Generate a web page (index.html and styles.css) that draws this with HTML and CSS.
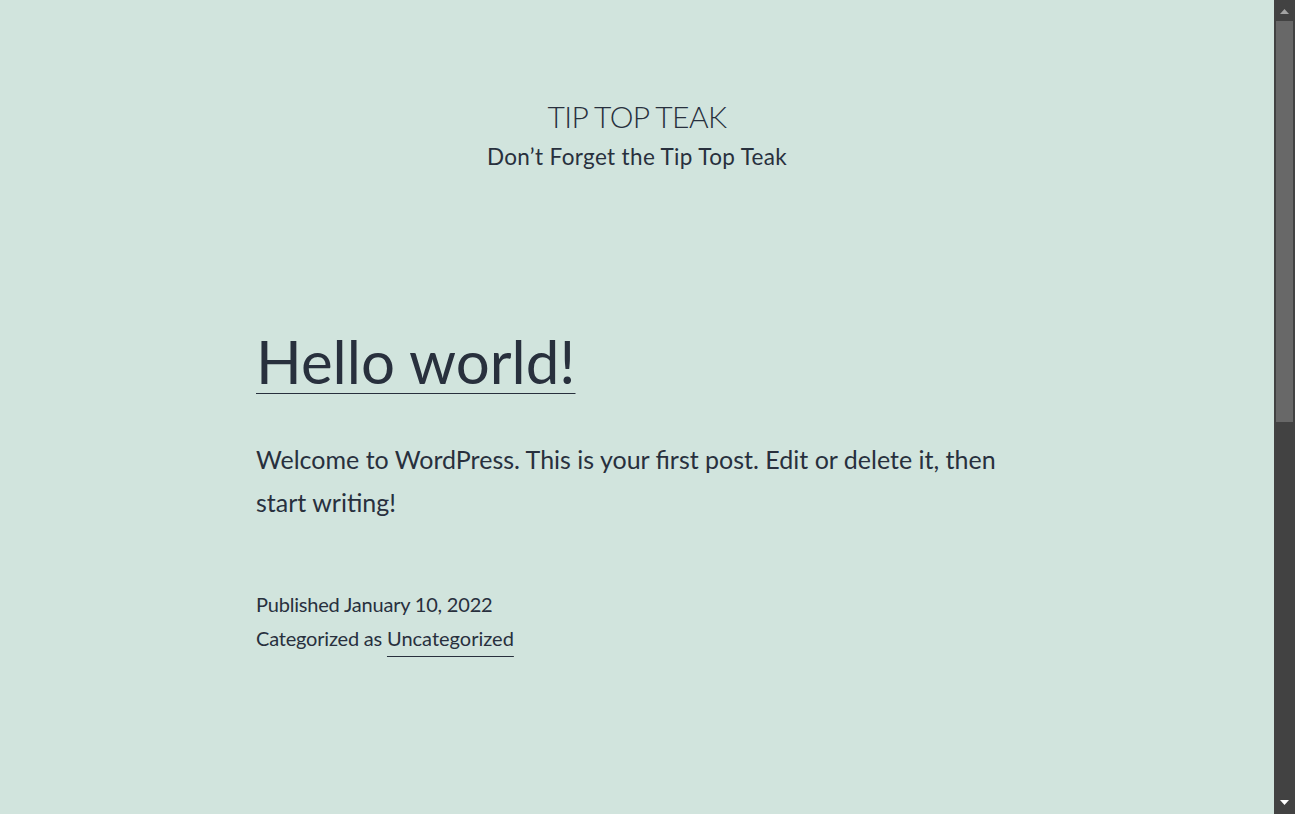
FILE: index.html
```html
<!DOCTYPE html>
<html lang="en">
<head>
<meta charset="utf-8">
<title>TIP TOP TEAK – Don’t Forget the Tip Top Teak</title>
<link rel="stylesheet" href="styles.css">
</head>
<body>
<div class="viewport">
  <div class="site">
    <header class="site-header">
      <p class="site-title"><a href="#">TIP TOP TEAK</a></p>
      <p class="site-description">Don’t Forget the Tip Top Teak</p>
    </header>

    <main class="site-main">
      <article class="post">
        <h2 class="entry-title"><a href="#">Hello world!</a></h2>
        <div class="entry-content">
          <p>Welcome to WordPress. This is your first post. Edit or delete it, then start writing!</p>
        </div>
        <footer class="entry-footer">
          <span class="posted-on">Published <time>January 10, 2022</time></span>
          <span class="cat-links">Categorized as <a href="#">Uncategorized</a></span>
        </footer>
      </article>
    </main>
  </div>
</div>

<div class="scrollbar" aria-hidden="true">
  <div class="sb-btn">
    <svg class="sb-arrow sb-up" width="21" height="21" viewBox="0 0 21 21"><polygon points="6,14 10.5,9 15,14" /></svg>
  </div>
  <div class="sb-track">
    <div class="sb-thumb"></div>
  </div>
  <div class="sb-btn">
    <svg class="sb-arrow sb-down" width="21" height="21" viewBox="0 0 21 21"><polygon points="6,7 15,7 10.5,12" /></svg>
  </div>
</div>
</body>
</html>
```

FILE: styles.css
```css
html,
body {
  height: 100%;
}

body {
  margin: 0;
  display: flex;
  overflow: hidden;
  background: #d1e4dd;
  color: #28303d;
  font-family: Lato, "Liberation Sans", sans-serif;
}

a {
  color: #28303d;
}

.viewport {
  flex: 1;
  min-width: 0;
  overflow: hidden;
}

.site {
  width: 762px;
  margin: 0 auto;
}

.site-header {
  padding-top: 97px;
  text-align: center;
}

.site-title {
  margin: 0;
  font-size: 30px;
  font-weight: 300;
  line-height: 39px;
  letter-spacing: -0.6px;
  text-transform: uppercase;
}

.site-title a {
  text-decoration: none;
}

.site-description {
  margin: 5px 0 0;
  font-size: 22.5px;
  line-height: 31px;
  letter-spacing: 0.35px;
}

.site-main {
  padding-top: 148px;
}

.entry-title {
  margin: 0;
  font-size: 60px;
  font-weight: 400;
  line-height: 82px;
}

.entry-title a {
  text-decoration-thickness: 1px;
  text-underline-offset: 9px;
}

.entry-content p {
  margin: 36px 0 0;
  font-size: 25px;
  line-height: 42.5px;
}

.entry-footer {
  display: flex;
  flex-direction: column;
  margin-top: 64px;
  font-size: 20px;
  line-height: 34px;
  letter-spacing: -0.2px;
}

.entry-footer a {
  letter-spacing: 0;
  text-decoration-thickness: 1px;
  text-underline-offset: 10px;
}

/* browser scrollbar (dark) */
.scrollbar {
  flex: 0 0 21px;
  display: flex;
  flex-direction: column;
  background: #424242;
}

.sb-btn {
  height: 21px;
  flex: 0 0 21px;
}

.sb-arrow {
  display: block;
}

.sb-up polygon {
  fill: #a3a3a3;
}

.sb-down polygon {
  fill: #ffffff;
}

.sb-track {
  flex: 1;
  padding: 0 2px;
}

.sb-thumb {
  height: 401px;
  background: #686868;
}
```
